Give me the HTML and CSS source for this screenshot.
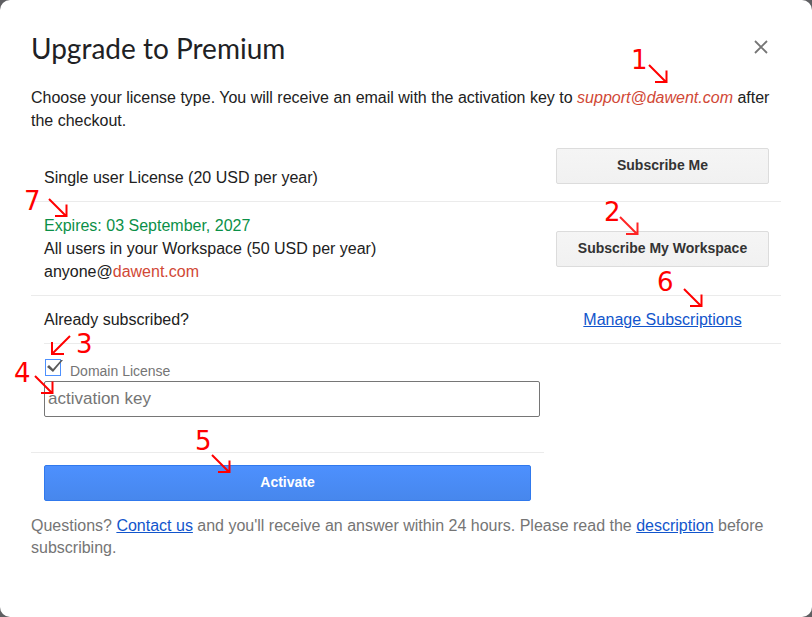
FILE: index.html
```html
<!DOCTYPE html>
<html lang="en">
<head>
<meta charset="utf-8">
<title>Upgrade to Premium</title>
<link rel="stylesheet" href="styles.css">
</head>
<body>
<main class="dialog">
  <header class="head">
    <h1 class="title">Upgrade to Premium</h1>
    <button class="close" type="button" aria-label="Close">
      <svg width="14" height="14" viewBox="0 0 14 14"><path d="M1 1L13 13M13 1L1 13" fill="none" stroke="#757575" stroke-width="1.8"/></svg>
    </button>
  </header>
  <p class="intro">Choose your license type. You will receive an email with the activation key to <em class="accent">support@dawent.com</em> after the checkout.</p>

  <section class="row row-single">
    <div>Single user License (20 USD per year)</div>
    <button class="btn" type="button">Subscribe Me</button>
  </section>
  <section class="row">
    <div>
      <div class="expires">Expires: 03 September, 2027</div>
      <div>All users in your Workspace (50 USD per year)</div>
      <div>anyone@<span class="accent">dawent.com</span></div>
    </div>
    <button class="btn" type="button">Subscribe My Workspace</button>
  </section>
  <section class="row row-manage">
    <div>Already subscribed?</div>
    <a class="manage" href="#">Manage Subscriptions</a>
  </section>

  <form class="form">
    <div class="key">
      <div class="check">
        <input class="box" type="checkbox" id="domain" checked>
        <svg class="tick" width="18" height="16" viewBox="0 0 18 16"><path d="M2 8L4 6L8 10L16 1L18 1L8 13Z" fill="#5a5a5a"/></svg>
        <label class="check-label" for="domain">Domain License</label>
      </div>
      <input class="field" type="text" aria-label="activation key" placeholder="activation key">
    </div>
    <button class="btn activate" type="button">Activate</button>
  </form>

  <p class="note">Questions? <a href="#">Contact us</a> and you'll receive an answer within 24 hours. Please read the <a href="#">description</a> before subscribing.</p>

  <svg class="marks" width="812" height="617" viewBox="0 0 812 617">
    <defs>
      <path id="arrow" d="M0 0L17 17M6 17H18M17.500 5.500V18"/>
    </defs>
    <g class="arrows">
      <use href="#arrow" x="649" y="65"/>
      <use href="#arrow" x="620" y="217" opacity="0.85"/>
      <use href="#arrow" x="35" y="376"/>
      <use href="#arrow" x="212" y="455"/>
      <use href="#arrow" x="684" y="289"/>
      <use href="#arrow" x="49" y="199"/>
      <path d="M70 336L53 353M52 342V355M52 354H64"/>
    </g>
    <g class="digits">
      <text x="631" y="69">1</text>
      <text x="604" y="221">2</text>
      <text x="76" y="353">3</text>
      <text x="14" y="382">4</text>
      <text x="195" y="450">5</text>
      <text x="657" y="291">6</text>
      <text x="24" y="210">7</text>
    </g>
  </svg>
</main>
</body>
</html>
```

FILE: styles.css
```css
* { box-sizing: border-box; }

body {
  margin: 0;
  background: #5f5f62;
  color: #212121;
  font: 16px/23px "Liberation Sans", Arial, sans-serif;
}

.dialog {
  position: relative;
  min-height: 100vh;
  padding: 30px 31px;
  background: #fff;
  border-radius: 10px;
  overflow: hidden;
}

.head {
  display: flex;
  justify-content: space-between;
  align-items: center;
  padding-right: 13px;
}

.title {
  margin: 0;
  color: #202124;
  font: 400 28px/36px Lato, sans-serif;
}

.close {
  display: flex;
  padding: 0 0 2px;
  border: 0;
  background: none;
}

.intro { margin: 20px 0 4px; }

.accent { color: #d14836; }
.expires { color: #0b9048; }

a { color: #15c; }

.row {
  display: grid;
  grid-template-columns: 1fr 213px;
  align-items: center;
  padding: 12px 12px 12px 13px;
  border-bottom: 1px solid #ebebeb;
}

.row-single { align-items: end; }
.row-single .btn { margin-bottom: 5px; }

.row-manage {
  margin-left: 13px;
  padding-left: 0;
}

.manage {
  text-align: center;
}

.btn {
  height: 36px;
  padding: 0 8px 2px;
  border: 1px solid #dcdcdc;
  border-radius: 2px;
  background: linear-gradient(#f5f5f5, #f1f1f1);
  color: #333;
  font: bold 14px "Liberation Sans", Arial, sans-serif;
}

.form { max-width: 513px; }

.key {
  padding: 15px 4px 35px 13px;
  border-bottom: 1px solid #ebebeb;
}

.check {
  position: relative;
  display: flex;
  gap: 9px;
  height: 22px;
  padding-left: 1px;
}

.box {
  width: 16px;
  height: 17px;
  margin: 0;
  border: 1px solid #4d90fe;
  background: #fff;
  appearance: none;
}

.tick {
  position: absolute;
  left: 1px;
  top: 0;
  pointer-events: none;
}

.check-label {
  padding-top: 1px;
  color: #757575;
  font-size: 14px;
}

.field {
  display: block;
  width: 100%;
  height: 36px;
  padding: 0 3px;
  border: 1px solid #767676;
  border-radius: 2px;
  color: #212121;
  font: 17px "Liberation Sans", Arial, sans-serif;
}

.field::placeholder { color: #757575; }

.activate {
  display: block;
  width: calc(100% - 26px);
  margin: 12px 13px 14px;
  border-color: #3079ed;
  background: linear-gradient(#4d90fe, #4787ed);
  color: #fff;
}

.note {
  margin: 0;
  color: #757575;
  line-height: 22px;
}

.marks {
  position: absolute;
  left: 0;
  top: 0;
  pointer-events: none;
}

.arrows {
  fill: none;
  stroke: #f00;
  stroke-width: 2;
}

.digits {
  fill: #f00;
  font: 26px "DejaVu Sans", sans-serif;
}
```
